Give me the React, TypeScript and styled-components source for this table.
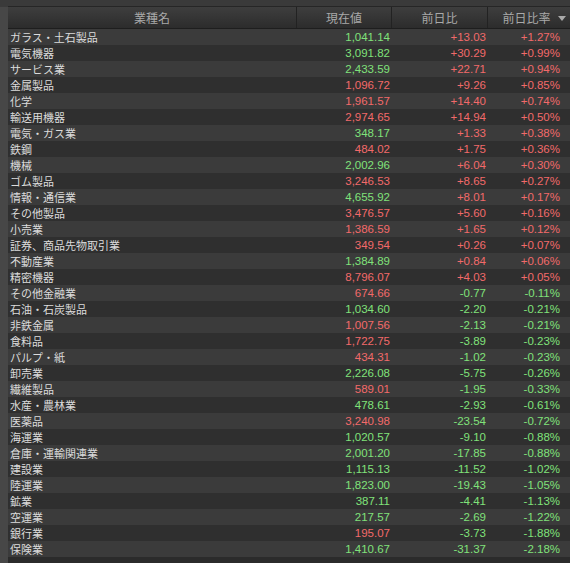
import React from "react";
import styled, { createGlobalStyle } from "styled-components";

const Global = createGlobalStyle`
  html, body { margin: 0; padding: 0; background: #2b2b2b; }
  body { font-family: "Liberation Sans", "Noto Sans CJK JP", sans-serif; }
`;

type Row = [string, string, string, string];

const rows: Row[] = [
  ["ガラス・土石製品", "1,041.14", "+13.03", "+1.27%"],
  ["電気機器", "3,091.82", "+30.29", "+0.99%"],
  ["サービス業", "2,433.59", "+22.71", "+0.94%"],
  ["金属製品", "1,096.72", "+9.26", "+0.85%"],
  ["化学", "1,961.57", "+14.40", "+0.74%"],
  ["輸送用機器", "2,974.65", "+14.94", "+0.50%"],
  ["電気・ガス業", "348.17", "+1.33", "+0.38%"],
  ["鉄鋼", "484.02", "+1.75", "+0.36%"],
  ["機械", "2,002.96", "+6.04", "+0.30%"],
  ["ゴム製品", "3,246.53", "+8.65", "+0.27%"],
  ["情報・通信業", "4,655.92", "+8.01", "+0.17%"],
  ["その他製品", "3,476.57", "+5.60", "+0.16%"],
  ["小売業", "1,386.59", "+1.65", "+0.12%"],
  ["証券、商品先物取引業", "349.54", "+0.26", "+0.07%"],
  ["不動産業", "1,384.89", "+0.84", "+0.06%"],
  ["精密機器", "8,796.07", "+4.03", "+0.05%"],
  ["その他金融業", "674.66", "-0.77", "-0.11%"],
  ["石油・石炭製品", "1,034.60", "-2.20", "-0.21%"],
  ["非鉄金属", "1,007.56", "-2.13", "-0.21%"],
  ["食料品", "1,722.75", "-3.89", "-0.23%"],
  ["パルプ・紙", "434.31", "-1.02", "-0.23%"],
  ["卸売業", "2,226.08", "-5.75", "-0.26%"],
  ["繊維製品", "589.01", "-1.95", "-0.33%"],
  ["水産・農林業", "478.61", "-2.93", "-0.61%"],
  ["医薬品", "3,240.98", "-23.54", "-0.72%"],
  ["海運業", "1,020.57", "-9.10", "-0.88%"],
  ["倉庫・運輸関連業", "2,001.20", "-17.85", "-0.88%"],
  ["建設業", "1,115.13", "-11.52", "-1.02%"],
  ["陸運業", "1,823.00", "-19.43", "-1.05%"],
  ["鉱業", "387.11", "-4.41", "-1.13%"],
  ["空運業", "217.57", "-2.69", "-1.22%"],
  ["銀行業", "195.07", "-3.73", "-1.88%"],
  ["保険業", "1,410.67", "-31.37", "-2.18%"],
];

const redPrices = new Set([
  "金属製品", "化学", "輸送用機器", "鉄鋼", "ゴム製品", "その他製品", "小売業",
  "証券、商品先物取引業", "精密機器", "その他金融業", "非鉄金属", "食料品",
  "パルプ・紙", "繊維製品", "医薬品", "銀行業",
]);

const Page = styled.div`
  width: 570px;
  height: 563px;
  display: flex;
  flex-direction: column;
  background: #2b2b2b;
  overflow: hidden;
`;

const TopStrip = styled.div`
  height: 7px;
  flex: none;
  background: #3a3a3a;
`;

const Body = styled.div`
  display: flex;
  flex: 1;
`;

const LeftStrip = styled.div`
  width: 8px;
  flex: none;
  background: #474747;
`;

const Table = styled.div`
  flex: 1;
  display: flex;
  flex-direction: column;
`;

const Grid = styled.div`
  display: grid;
  grid-template-columns: 289px 95px 96px 82px;
`;

const Header = styled(Grid)`
  height: 21px;
  background: linear-gradient(#3e3e3e, #2c2c2c);
  border-top: 1px solid #262626;
  border-bottom: 1px solid #1e1e1e;
  box-sizing: content-box;
  margin-top: -1px;
`;

const HeadCell = styled.div<{ $last?: boolean }>`
  display: flex;
  align-items: center;
  justify-content: center;
  gap: 7px;
  color: #a9a9a9;
  font-family: "Noto Sans CJK JP", sans-serif;
  font-size: 12px;
  line-height: 21px;
  border-right: ${(p) => (p.$last ? "none" : "1px solid #222")};
  padding-left: ${(p) => (p.$last ? "10px" : "0")};
`;

const Arrow = styled.span`
  width: 0;
  height: 0;
  border-left: 4px solid transparent;
  border-right: 4px solid transparent;
  border-top: 5px solid #a9a9a9;
  margin-top: 1px;
`;

const RowLine = styled(Grid)<{ $alt: boolean }>`
  height: 16px;
  background: ${(p) => (p.$alt ? "#2f2f2f" : "#3b3b3b")};
`;

const NameCell = styled.div`
  color: #dcdcdc;
  font-family: "Noto Sans CJK JP", sans-serif;
  font-size: 11px;
  line-height: 16px;
  padding-left: 2px;
  white-space: nowrap;
`;

const NumCell = styled.div<{ $up: boolean; $pad: number }>`
  color: ${(p) => (p.$up ? "#f26a6a" : "#80e27a")};
  font-family: "Liberation Sans", Arial, sans-serif;
  font-size: 11.5px;
  line-height: 16px;
  text-align: right;
  padding-right: ${(p) => p.$pad}px;
  white-space: nowrap;
`;

export default function App() {
  return (
    <Page>
      <Global />
      <TopStrip />
      <Body>
        <LeftStrip />
        <Table>
          <Header>
            <HeadCell>業種名</HeadCell>
            <HeadCell>現在値</HeadCell>
            <HeadCell>前日比</HeadCell>
            <HeadCell $last>
              前日比率 <Arrow />
            </HeadCell>
          </Header>
          {rows.map(([name, price, chg, pct], i) => {
            const up = chg.startsWith("+");
            return (
              <RowLine key={name} $alt={i % 2 === 1}>
                <NameCell>{name}</NameCell>
                <NumCell $up={redPrices.has(name)} $pad={2}>{price}</NumCell>
                <NumCell $up={up} $pad={2}>{chg}</NumCell>
                <NumCell $up={up} $pad={10}>{pct}</NumCell>
              </RowLine>
            );
          })}
        </Table>
      </Body>
    </Page>
  );
}
